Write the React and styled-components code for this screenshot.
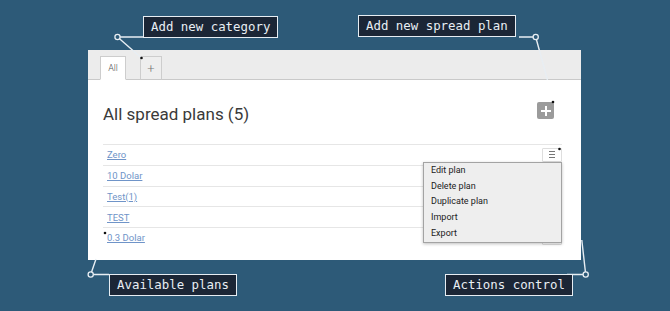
import React from 'react';
import styled, { createGlobalStyle } from 'styled-components';

const GlobalStyle = createGlobalStyle`
  html, body {
    margin: 0;
    padding: 0;
  }
  body {
    background: #2d5a78;
    font-family: Roboto, 'Liberation Sans', Arial, sans-serif;
  }
`;

const plans = ['Zero', '10 Dolar', 'Test(1)', 'TEST', '0.3 Dolar'];
const actions = ['Edit plan', 'Delete plan', 'Duplicate plan', 'Import', 'Export'];

// 설명 말풍선 위치
const callouts = [
  { text: 'Add new category', x: 143, y: 16 },
  { text: 'Add new spread plan', x: 358, y: 15 },
  { text: 'Available plans', x: 109, y: 274 },
  { text: 'Actions control', x: 445, y: 274 },
];

const Guides = () => (
  <St.guideSvg width="670" height="311" viewBox="0 0 670 311">
    <g stroke="#e8eef3" strokeWidth="1.4" fill="none">
      <polyline points="143,37 117.5,37 141.5,58" />
      <polyline points="519,37 535.7,37 547.5,80" />
      <polyline points="109,274.5 90.7,274.5 96,259" />
      <polyline points="567,274.5 585.7,274.5 581.8,240" />
    </g>
    <g stroke="#e8eef3" strokeWidth="1.3" fill="#2d5a78">
      <circle cx="117.5" cy="37" r="2.6" />
      <circle cx="535.7" cy="37" r="2.6" />
      <circle cx="90.7" cy="274.5" r="2.6" />
      <circle cx="585.7" cy="274.5" r="2.6" />
    </g>
    <g fill="#111">
      <circle cx="141.5" cy="58" r="1.3" />
      <circle cx="553" cy="102" r="1.3" />
      <circle cx="559.5" cy="149" r="1.3" />
      <circle cx="105" cy="233" r="1.3" />
    </g>
  </St.guideSvg>
);

const MenuIcon = () => (
  <svg width="8" height="9" viewBox="0 0 8 9">
    <g stroke="#777" strokeWidth="1">
      <line x1="1" y1="1.5" x2="7" y2="1.5" />
      <line x1="1" y1="4.5" x2="7" y2="4.5" />
      <line x1="1" y1="7.5" x2="7" y2="7.5" />
    </g>
  </svg>
);

const App = () => {
  return (
    <St.page>
      <GlobalStyle />
      <St.panel>
        <St.tabBar>
          <St.tab $active>All</St.tab>
          <St.tab>+</St.tab>
        </St.tabBar>
        <St.content>
          <St.headRow>
            <St.title>All spread plans (5)</St.title>
            <St.addBtn aria-label="Add new spread plan" />
          </St.headRow>
          <St.table>
            {plans.map((name, i) => (
              <St.row key={name}>
                <St.planLink href="#">{name}</St.planLink>
                <St.actionCell>
                  <St.actionBtn>
                    <MenuIcon />
                  </St.actionBtn>
                  {i === 0 && (
                    <St.menu>
                      {actions.map(a => (
                        <St.menuItem key={a}>{a}</St.menuItem>
                      ))}
                    </St.menu>
                  )}
                </St.actionCell>
              </St.row>
            ))}
          </St.table>
        </St.content>
      </St.panel>

      <Guides />
      {callouts.map(c => (
        <St.callout key={c.text} $x={c.x} $y={c.y}>
          {c.text}
        </St.callout>
      ))}
    </St.page>
  );
};

export default App;

const St = {
  page: styled.div`
    position: relative;
    width: 670px;
    height: 311px;
    box-sizing: border-box;
    padding: 50px 89px 0 88px;
    overflow: hidden;
  `,
  panel: styled.section`
    height: 210px;
    background: #fff;
  `,
  tabBar: styled.div`
    display: flex;
    align-items: flex-end;
    gap: 14px;
    height: 30px;
    box-sizing: border-box;
    padding-left: 12px;
    background: #ececec;
    border-bottom: 1px solid #c9c9c9;
  `,
  tab: styled.div`
    width: ${({ $active }) => ($active ? '26px' : '22px')};
    height: 24px;
    box-sizing: border-box;
    margin-bottom: -1px;
    display: flex;
    align-items: center;
    justify-content: center;
    border: 1px solid #cdcdcd;
    border-bottom: ${({ $active }) => ($active ? '1px solid #fff' : '1px solid #c9c9c9')};
    background: ${({ $active }) => ($active ? '#fff' : '#eeeeee')};
    color: ${({ $active }) => ($active ? '#555' : '#777')};
    font-size: ${({ $active }) => ($active ? '9px' : '13px')};
    font-weight: 300;
  `,
  content: styled.div`
    padding: 0 19px 0 15px;
  `,
  headRow: styled.div`
    display: flex;
    justify-content: space-between;
    align-items: flex-start;
    margin-top: 24px;
  `,
  title: styled.h1`
    margin: 0;
    font-size: 17px;
    line-height: 20px;
    font-weight: 400;
    color: #3a3a3a;
  `,
  addBtn: styled.button`
    position: relative;
    width: 17px;
    height: 17px;
    margin: -2px 8px 0 0;
    padding: 0;
    border: none;
    border-radius: 2px;
    background: #9b9b9b;
    &::before,
    &::after {
      content: '';
      position: absolute;
      left: 50%;
      top: 50%;
      background: #fff;
      transform: translate(-50%, -50%);
    }
    &::before {
      width: 10px;
      height: 2px;
    }
    &::after {
      width: 2px;
      height: 10px;
    }
  `,
  table: styled.div`
    margin-top: 20px;
  `,
  row: styled.div`
    display: flex;
    align-items: center;
    justify-content: space-between;
    height: 20.75px;
    box-sizing: border-box;
    padding-left: 4px;
    border-top: 1px solid #e6e6e6;
  `,
  planLink: styled.a`
    font-size: 9.5px;
    color: #6f94c8;
    text-decoration: underline;
  `,
  actionCell: styled.div`
    position: relative;
    display: flex;
  `,
  actionBtn: styled.button`
    display: flex;
    align-items: center;
    justify-content: center;
    width: 20px;
    height: 14px;
    padding: 0;
    background: #fff;
    border: 1px solid #dedede;
    border-radius: 1px;
  `,
  menu: styled.ul`
    position: absolute;
    top: 14px;
    right: 0;
    z-index: 2;
    width: 139px;
    margin: 0;
    padding: 0;
    list-style: none;
    box-sizing: border-box;
    background: #eeeeee;
    border: 1px solid #a3a3a3;
    box-shadow: 0 1px 3px rgba(0, 0, 0, 0.25);
  `,
  menuItem: styled.li`
    height: 15.8px;
    line-height: 15.8px;
    padding-left: 7px;
    font-size: 9px;
    color: #222;
  `,
  guideSvg: styled.svg`
    position: absolute;
    left: 0;
    top: 0;
    pointer-events: none;
  `,
  callout: styled.div`
    position: absolute;
    left: ${({ $x }) => $x}px;
    top: ${({ $y }) => $y}px;
    height: 22px;
    box-sizing: border-box;
    padding: 0 7px;
    line-height: 19px;
    white-space: nowrap;
    background: #1b2636;
    border: 1.5px solid #e6edf3;
    color: #e8eef4;
    font-family: 'DejaVu Sans Mono', 'Liberation Mono', monospace;
    font-size: 12.4px;
  `,
};
